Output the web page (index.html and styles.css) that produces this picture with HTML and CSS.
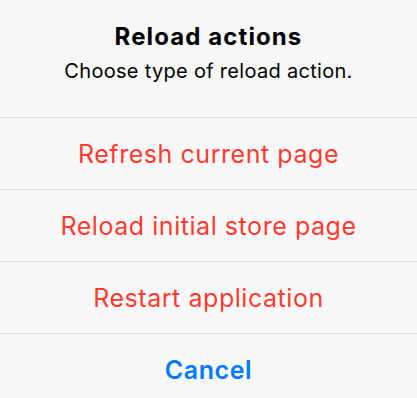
FILE: index.html
```html
<!DOCTYPE html>
<html>
<head>
<meta charset="utf-8">
<link rel="stylesheet" href="styles.css">
</head>
<body>
<div class="sheet">
  <div class="header">
    <div class="title">Reload actions</div>
    <div class="subtitle">Choose type of reload action.</div>
  </div>
  <div class="row destructive">Refresh current page</div>
  <div class="row destructive">Reload initial store page</div>
  <div class="row destructive">Restart application</div>
  <div class="row cancel">Cancel</div>
</div>
</body>
</html>
```
FILE: styles.css
```css
html, body {
  margin: 0;
  padding: 0;
  background: #f8f8f8;
}
.sheet {
  width: 417px;
  height: 398px;
  overflow: hidden;
  font-family: Inter, "Noto Sans", sans-serif;
  display: flex;
  flex-direction: column;
}
.header {
  flex: none;
  height: 118px;
  box-sizing: border-box;
  padding-top: 23px;
  text-align: center;
  color: #000;
  border-bottom: 1px solid #dddddd;
}
.title {
  font-size: 24px;
  font-weight: 700;
  line-height: 28px;
  letter-spacing: 1.1px;
}
.subtitle {
  margin-top: 8px;
  font-size: 20px;
  line-height: 24px;
  letter-spacing: 0.3px;
}
.row {
  flex: none;
  height: 72px;
  box-sizing: border-box;
  display: flex;
  align-items: center;
  justify-content: center;
  font-size: 25px;
  letter-spacing: 0.55px;
  border-bottom: 1px solid #dddddd;
}
.destructive {
  color: #ff3b30;
}
.cancel {
  color: #007aff;
  font-weight: 600;
  border-bottom: none;
}
```
